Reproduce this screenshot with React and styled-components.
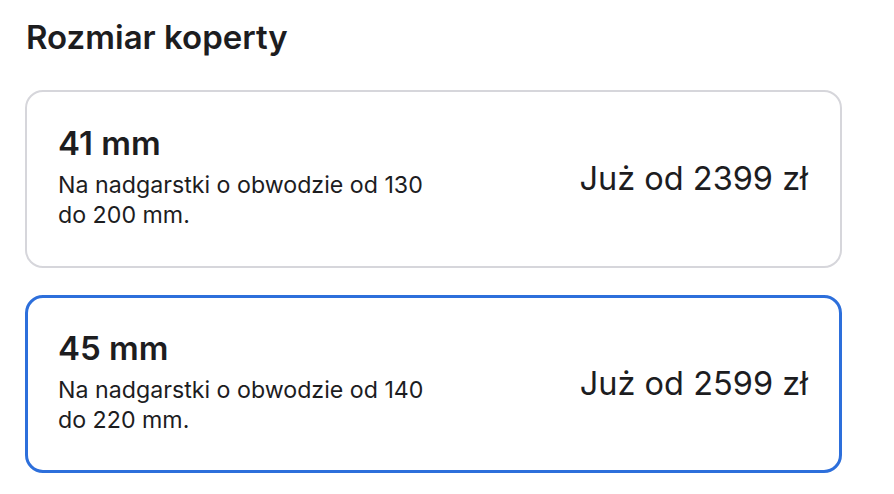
import React from "react";
import styled, { createGlobalStyle } from "styled-components";

const GlobalStyle = createGlobalStyle`
  html, body {
    margin: 0;
    padding: 0;
    background: #ffffff;
  }
  body {
    font-family: Inter, "Liberation Sans", Arial, sans-serif;
    color: #1d1d1f;
    -webkit-font-smoothing: antialiased;
  }
`;

const Section = styled.section`
  width: 817px;
  padding: 18px 0 0 25px;
  display: flex;
  flex-direction: column;
`;

const Heading = styled.h2`
  margin: 0 0 34px 1px;
  font-size: 33px;
  line-height: 38px;
  font-weight: 600;
  letter-spacing: 0;
`;

const Options = styled.div`
  display: flex;
  flex-direction: column;
  gap: 27px;
`;

const Card = styled.div`
  box-sizing: border-box;
  min-height: 178px;
  display: flex;
  align-items: center;
  justify-content: space-between;
  border-radius: 18px;
  border: ${(p) => (p.$selected ? "3px solid #2d6fdb" : "2px solid #d6d6db")};
  padding-left: ${(p) => (p.$selected ? "30px" : "31px")};
  padding-right: ${(p) => (p.$selected ? "31px" : "32px")};
  background: #fff;
  cursor: pointer;
`;

const Info = styled.div`
  display: flex;
  flex-direction: column;
  align-self: flex-start;
  padding-top: ${(p) => (p.$selected ? "31px" : "32px")};
`;

const Size = styled.div`
  font-size: 33px;
  line-height: 38px;
  font-weight: 600;
  letter-spacing: 0;
`;

const Desc = styled.div`
  margin-top: 8px;
  width: 380px;
  font-size: 23.2px;
  line-height: 30px;
  font-weight: 400;
  letter-spacing: 0;
`;

const Price = styled.div`
  font-size: 32.5px;
  line-height: 38px;
  font-weight: 400;
  letter-spacing: 0;
  white-space: nowrap;
`;

const options = [
  { size: "41 mm", desc: "Na nadgarstki o obwodzie od 130 do 200 mm.", price: "Już od 2399 zł" },
  { size: "45 mm", desc: "Na nadgarstki o obwodzie od 140 do 220 mm.", price: "Już od 2599 zł", selected: true },
];

export default function App() {
  return (
    <>
      <GlobalStyle />
      <Section>
        <Heading>Rozmiar koperty</Heading>
        <Options>
          {options.map((o) => (
            <Card key={o.size} $selected={o.selected}>
              <Info $selected={o.selected}>
                <Size>{o.size}</Size>
                <Desc>{o.desc}</Desc>
              </Info>
              <Price>{o.price}</Price>
            </Card>
          ))}
        </Options>
      </Section>
    </>
  );
}
